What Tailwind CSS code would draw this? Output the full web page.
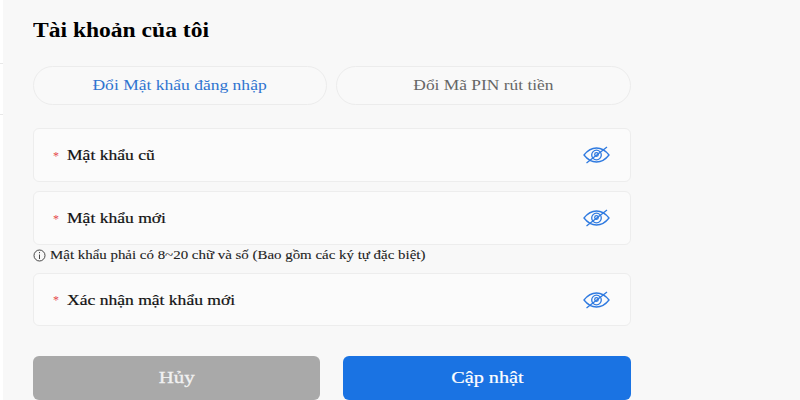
<!DOCTYPE html>
<html lang="vi">
  <head>
    <meta charset="UTF-8" />
    <title>Tài khoản của tôi</title>
    <script src="https://cdn.jsdelivr.net/npm/@tailwindcss/browser@4"></script>
  </head>
  <body class="h-[400px] w-[800px] overflow-hidden bg-[#f8f8f8] font-['Liberation_Serif',serif]">
    <div class="flex h-[400px]">
      <!-- left edge of the page behind the panel -->
      <div class="w-[3px] shrink-0 bg-white">
        <div class="mt-[63px] h-px bg-[#e8e8e8]"></div>
        <div class="mt-[50px] h-px bg-[#e8e8e8]"></div>
      </div>

      <!-- the shot is stretched sideways, so text carries a scale-x -->
      <main class="w-[628px] shrink-0 pl-[30px]">
        <h1 class="mt-[18px] h-[24px] origin-left scale-x-[1.177] text-[20px] leading-[24px] font-bold text-black">Tài khoản của tôi</h1>

        <div class="mt-[24px] flex gap-[9px]">
          <button class="h-[39px] w-[294px] rounded-full border border-[#ececec] bg-[#f9f9f9] text-[15px] text-[#2f74d0]"><span class="inline-block scale-x-[1.168]">Đổi Mật khẩu đăng nhập</span></button>
          <button class="h-[39px] w-[295px] rounded-full border border-[#ececec] bg-[#f9f9f9] text-[15px] text-[#666]"><span class="inline-block scale-x-[1.16]">Đổi Mã PIN rút tiền</span></button>
        </div>

        <div class="mt-[23px] flex h-[54px] w-[598px] items-center rounded-md border border-[#ededed] bg-[#fbfbfb] pr-[20px] pl-[19px]">
          <span class="w-[14px] pt-px text-[12px] text-[#e5484d]">*</span>
          <span class="flex-1 origin-left scale-x-[1.17] pt-px text-[15px] text-[#111] [-webkit-text-stroke:0.2px_#111]">Mật khẩu cũ</span>
          <svg class="h-[26px] w-[27px]" viewBox="0 0 27 26" fill="none" stroke="#2f7ae0" stroke-width="1.3">
            <path d="M1 13C4.500 8.500 9 6 13.500 6S22.500 8.500 26 13C22.500 17.500 18 20 13.500 20S4.500 17.500 1 13Z" />
            <circle cx="13.500" cy="13" r="4.800" />
            <circle cx="13.500" cy="12.500" r="1.800" />
            <path d="M3.500 21L24 5" />
          </svg>
        </div>

        <div class="mt-[9px] flex h-[54px] w-[598px] items-center rounded-md border border-[#ededed] bg-[#fbfbfb] pr-[20px] pl-[19px]">
          <span class="w-[14px] pt-px text-[12px] text-[#e5484d]">*</span>
          <span class="flex-1 origin-left scale-x-[1.17] pt-px text-[15px] text-[#111] [-webkit-text-stroke:0.2px_#111]">Mật khẩu mới</span>
          <svg class="h-[26px] w-[27px]" viewBox="0 0 27 26" fill="none" stroke="#2f7ae0" stroke-width="1.3">
            <path d="M1 13C4.500 8.500 9 6 13.500 6S22.500 8.500 26 13C22.500 17.500 18 20 13.500 20S4.500 17.500 1 13Z" />
            <circle cx="13.500" cy="13" r="4.800" />
            <circle cx="13.500" cy="12.500" r="1.800" />
            <path d="M3.500 21L24 5" />
          </svg>
        </div>

        <p class="mt-[2px] flex h-[16px] items-center text-[13px] leading-[16px] text-[#222]">
          <svg class="mr-[4px] h-[13px] w-[13px] shrink-0" viewBox="0 0 13 13" fill="none" stroke="#333" stroke-width="0.9">
            <circle cx="6.500" cy="6.500" r="5.500" />
            <path d="M6.500 5.500V10M6.500 3V4.200" />
          </svg>
          <span class="origin-left scale-x-[1.147] [-webkit-text-stroke:0.1px_#222]">Mật khẩu phải có 8~20 chữ và số (Bao gồm các ký tự đặc biệt)</span>
        </p>

        <div class="mt-[10px] flex h-[53px] w-[598px] items-center rounded-md border border-[#ededed] bg-[#fbfbfb] pr-[20px] pl-[19px]">
          <span class="w-[14px] pt-px text-[12px] text-[#e5484d]">*</span>
          <span class="flex-1 origin-left scale-x-[1.17] pt-px text-[15px] text-[#111] [-webkit-text-stroke:0.2px_#111]">Xác nhận mật khẩu mới</span>
          <svg class="h-[26px] w-[27px]" viewBox="0 0 27 26" fill="none" stroke="#2f7ae0" stroke-width="1.3">
            <path d="M1 13C4.500 8.500 9 6 13.500 6S22.500 8.500 26 13C22.500 17.500 18 20 13.500 20S4.500 17.500 1 13Z" />
            <circle cx="13.500" cy="13" r="4.800" />
            <circle cx="13.500" cy="12.500" r="1.800" />
            <path d="M3.500 21L24 5" />
          </svg>
        </div>

        <div class="mt-[30px] flex gap-[23px]">
          <button class="h-[44px] w-[287px] rounded-md bg-[#a9a9a9] text-[17px] text-[#f1f1f1] [-webkit-text-stroke:0.3px_#f1f1f1]"><span class="inline-block scale-x-[1.23]">Hủy</span></button>
          <button class="h-[44px] w-[288px] rounded-md bg-[#1a73e3] text-[17px] text-white [-webkit-text-stroke:0.2px_#fff]"><span class="inline-block scale-x-[1.19]">Cập nhật</span></button>
        </div>
      </main>
    </div>
  </body>
</html>
